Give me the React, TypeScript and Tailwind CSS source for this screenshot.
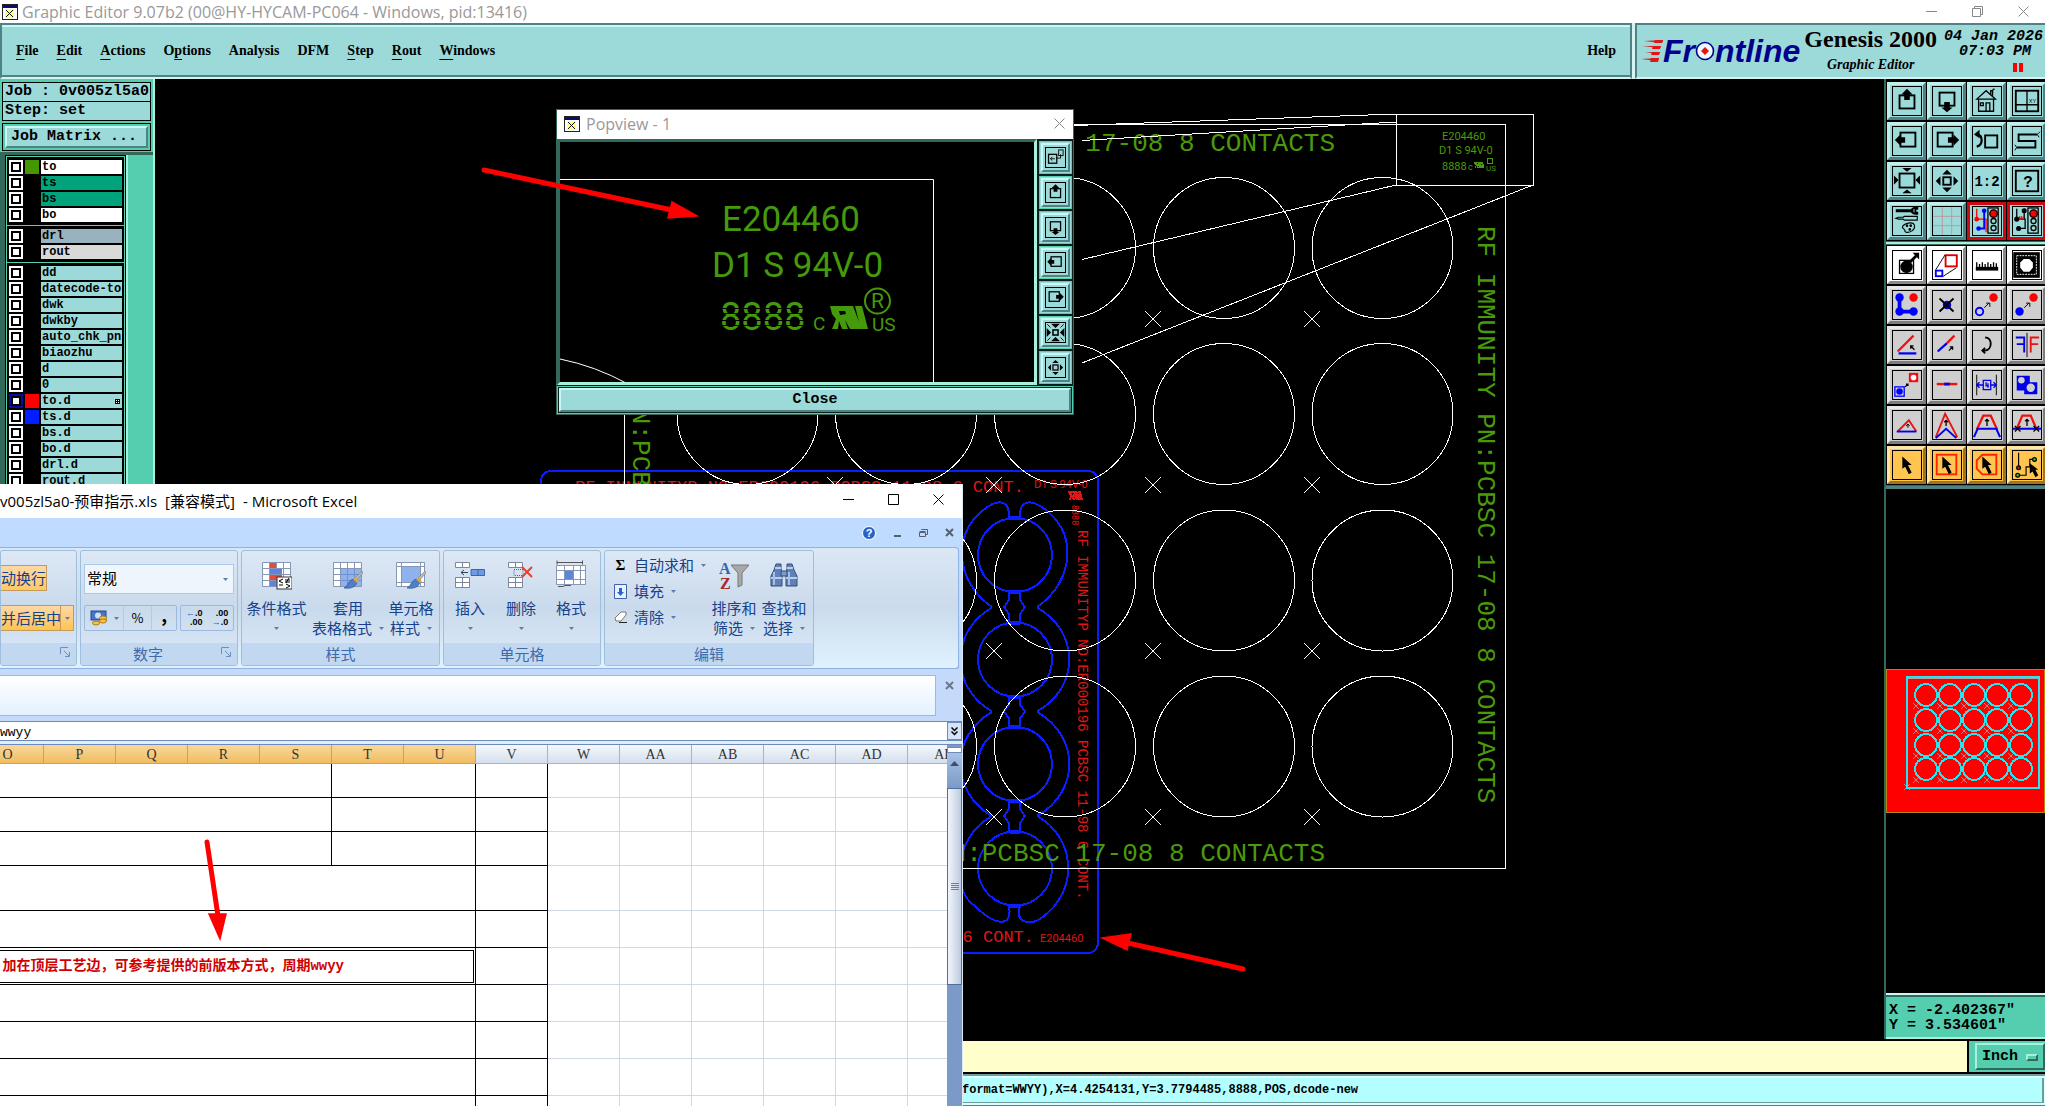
import { useState, type ReactNode } from 'react'

interface Layer {
  name: string
  bg: string
  swatch?: string
  active?: boolean
  marked?: boolean
}

const SIGNAL = 'bg-[#9cdada]'

const layerGroups: Layer[][] = [
  [
    { name: 'to', bg: 'bg-white', swatch: 'bg-[#459700]' },
    { name: 'ts', bg: 'bg-[#00a37c]' },
    { name: 'bs', bg: 'bg-[#00a37c]' },
    { name: 'bo', bg: 'bg-white' },
  ],
  [
    { name: 'drl', bg: 'bg-[#99b2bf]' },
    { name: 'rout', bg: 'bg-[#d9d9d9]' },
  ],
  [
    { name: 'dd', bg: SIGNAL },
    { name: 'datecode-to', bg: SIGNAL },
    { name: 'dwk', bg: SIGNAL },
    { name: 'dwkby', bg: SIGNAL },
    { name: 'auto_chk_pnl', bg: SIGNAL },
    { name: 'biaozhu', bg: SIGNAL },
    { name: 'd', bg: SIGNAL },
    { name: '0', bg: SIGNAL },
    { name: 'to.d', bg: SIGNAL, swatch: 'bg-[#ff0000]', active: true, marked: true },
    { name: 'ts.d', bg: SIGNAL, swatch: 'bg-[#001eff]' },
    { name: 'bs.d', bg: SIGNAL },
    { name: 'bo.d', bg: SIGNAL },
    { name: 'drl.d', bg: SIGNAL },
    { name: 'rout.d', bg: SIGNAL },
  ],
]

// before / underlined / after
const menus = [
  ['', 'F', 'ile'],
  ['', 'E', 'dit'],
  ['', 'A', 'ctions'],
  ['O', 'p', 'tions'],
  ['Analysis', '', ''],
  ['DFM', '', ''],
  ['', 'S', 'tep'],
  ['', 'R', 'out'],
  ['', 'W', 'indows'],
]

const BEVEL = 'border-2 border-t-[#c9f7f5] border-l-[#c9f7f5] border-r-[#4f8285] border-b-[#4f8285]'

/* ---------- icons ---------- */

function Svg({ children, className = 'w-full h-full' }: { children: ReactNode; className?: string }) {
  return (
    <svg viewBox="0 0 30 30" className={className} fill="none" stroke="#000" strokeWidth="1.4" aria-hidden="true">
      {children}
    </svg>
  )
}

const Tri = ({ d, fill = '#000' }: { d: string; fill?: string }) => <path d={d} fill={fill} stroke="none" />

const icons: Record<string, ReactNode> = {
  panUp: <><rect x="7" y="9" width="16" height="14" strokeWidth="2" /><Tri d="M15 2l6 6h-3v6h-6v-6h-3z" /></>,
  panDown: <><rect x="7" y="6" width="16" height="14" strokeWidth="2" /><Tri d="M15 27l6-5h-3v-6h-6v6h-3z" /></>,
  panLeft: <><rect x="8" y="6" width="16" height="15" strokeWidth="2" /><Tri d="M2 14l6-6v3h5v6H8v3z" /></>,
  panRight: <><rect x="5" y="6" width="16" height="15" strokeWidth="2" /><Tri d="M28 14l-6-6v3h-6v6h6v3z" /></>,
  home: <><path d="M4 13L14 4l10 9zM6 13v13h16V13M14 26v-9h4v9M8 17h3v3H8zM19 8V4h2v5M21 3l2-1" /></>,
  panes: <><rect x="3" y="4" width="24" height="22" strokeWidth="2" /><path d="M15 4v22M3 19h24" strokeWidth="1.4" /><text x="17" y="17" fontSize="6" stroke="none" fill="#000" fontFamily="Liberation Sans">XY</text></>,
  back: <><rect x="13" y="9" width="13" height="13" strokeWidth="2" /><path d="M4 8c7 1 7 11 0 13" strokeWidth="2.4" /><Tri d="M1 8l6-5v9z" /></>,
  snake: <><path d="M26 8H6v7h18v7H4" strokeWidth="2" /><path d="M26 8l3-3M26 8l2 3M4 22l-2-3M4 22l-2 3" strokeWidth="1" /></>,
  zoomIn: <><rect x="7" y="7" width="16" height="15" strokeWidth="2" /><Tri d="M10 1h10l-5 4zM10 28h10l-5-4zM1 9v10l5-5zM29 9v10l-5-5z" /></>,
  zoomOut: <><rect x="11" y="11" width="8" height="8" strokeWidth="2" /><Tri d="M10 8h10l-5-5zM10 22h10l-5 5zM8 10v10l-5-5zM22 10v10l5-5z" /></>,
  ratio: <text x="15" y="20" textAnchor="middle" fontSize="15" fontWeight="bold" stroke="none" fill="#000" fontFamily="Liberation Mono">1:2</text>,
  help: <><rect x="3" y="4" width="24" height="22" strokeWidth="2" /><text x="16" y="21" textAnchor="middle" fontSize="17" fontWeight="bold" stroke="none" fill="#000" fontFamily="Liberation Mono">?</text></>,
  tools: <><path d="M3 4h15M17 4h5" strokeWidth="3" /><path d="M27 1c-5-1-7 1-7 3s2 4 7 3M27 2h-3v4h3" strokeWidth="2" /><path d="M3 12l3-1h5l1-1h14v4H12l-1-1H6z" strokeWidth="1.200" /><path d="M10 22c1-5 12-7 13-2 1 4-4 8-9 7-3-1 0-2-2-3z" strokeWidth="1.200" /><circle cx="15" cy="20" r=".7" /><circle cx="19" cy="20" r=".7" /><circle cx="18" cy="24" r=".7" /></>,
  grid: <path d="M10 0v30M20 0v30M0 10h30M0 20h30" stroke="#b89a9a" strokeWidth="1" />,
  netBlue: <><path d="M4 2v11h10v14" stroke="#f00" /><path d="M12 4v19H6" stroke="#00f" strokeWidth="2" /><circle cx="4" cy="13" r="2.5" fill="#f00" stroke="none" /><circle cx="12" cy="4" r="2.5" fill="#00f" stroke="none" /><circle cx="6" cy="23" r="2.5" fill="#00f" stroke="none" /><rect x="16" y="1" width="11" height="27" /><circle cx="22" cy="7" r="4" fill="#f00" /><circle cx="22" cy="15" r="2.7" /><circle cx="22" cy="22.500" r="2.700" /></>,
  netBlack: <><path d="M4 2v11h9v10H6M12 4v9" /><path d="M7 13v-3M9 13v-3M11 13v-3M6 13h6" stroke="#f00" /><circle cx="4" cy="13" r="2" fill="#000" /><circle cx="12" cy="4" r="2" fill="#000" /><circle cx="6" cy="23" r="2" fill="#000" /><rect x="16" y="1" width="11" height="27" /><circle cx="22" cy="7" r="4" fill="#f00" /><circle cx="22" cy="15" r="2.700" /><circle cx="22" cy="22.500" r="2.700" /></>,
  padMove: <><rect x="7" y="10" width="15" height="14" /><circle cx="14.500" cy="17" r="6" fill="#000" /><path d="M18 12l7-7" strokeWidth="3" /><Tri d="M21 2h7v7z" /></>,
  copyScale: <><rect x="13.500" y="4.500" width="12" height="12" stroke="#d00" strokeWidth="2" /><rect x="3" y="21" width="7" height="6" stroke="#00f" strokeWidth="2" /><path d="M3 20L13 4M11 27l14-9" strokeWidth="1" /></>,
  ruler: <><path d="M3 19h24" strokeWidth="4" /><path d="M4 12v6M7 14v4M10 12v6M13 14v4M16 12v6M19 14v4M22 12v6M25 13v5" strokeWidth="1.400" /></>,
  frame: <><rect x="1" y="2" width="27" height="26" fill="#000" /><rect x="4" y="5" width="21" height="20" stroke="#fff" strokeWidth="1" strokeDasharray="2 1" /><path d="M11 8h7l4 4v6l-4 5h-7l-4-5v-6z" fill="#fff" /></>,
  nodes: <><path d="M7 7v15h15" stroke="#00f" strokeWidth="4" /><circle cx="7" cy="7" r="4.500" fill="#00f" stroke="none" /><circle cx="7" cy="22" r="4.500" fill="#00f" stroke="none" /><circle cx="22" cy="22" r="4.500" fill="#00f" stroke="none" /><circle cx="22" cy="7" r="4.500" fill="#f00" stroke="none" /></>,
  remove: <><circle cx="15" cy="15" r="4.500" fill="#00c" stroke="none" /><path d="M7 8l15 14M22 8L7 22" strokeWidth="2" /></>,
  ringTo: <><circle cx="7" cy="22" r="4" stroke="#00f" strokeWidth="2" /><circle cx="22" cy="7" r="4.500" fill="#f00" stroke="none" /><path d="M12 18l5-5M14 13h4v4" strokeWidth="1" /></>,
  discTo: <><circle cx="7" cy="22" r="4.500" fill="#00f" stroke="none" /><circle cx="22" cy="7" r="4.500" fill="#f00" stroke="none" /><path d="M12 18l5-5M14 13h4v4" strokeWidth="1" /></>,
  angle: <><path d="M5 22L22 5" stroke="#e11" strokeWidth="2.400" /><path d="M6 24h19" stroke="#00e" strokeWidth="2.400" /><path d="M23 20l-4-4M19 19v-3h3" /></>,
  slope: <><path d="M5 22l10-9" stroke="#00e" strokeWidth="2.400" /><path d="M15 13l8-8" stroke="#e11" strokeWidth="2.400" /><path d="M17 21l4-4M18 17h3v3" /></>,
  rotate: <path d="M13 7c8 0 8 13 0 14h-3M13 18l-3 3 3 3" strokeWidth="2" />,
  mirror: <><path d="M15 2v26" strokeWidth="1" /><path d="M12 23V7H3M12 14H4" stroke="#00e" strokeWidth="2" /><path d="M19 23V7h9M19 14h8" stroke="#e11" strokeWidth="2" /></>,
  swap: <><rect x="17" y="2" width="10" height="10" fill="#e11" stroke="none" /><circle cx="22" cy="7" r="3" fill="#fff" stroke="none" /><rect x="2" y="17" width="10" height="10" stroke="#00f" /><circle cx="7" cy="22" r="3.500" fill="#00f" stroke="none" /><path d="M13 17l3-3M14 14h2v2" /></>,
  segment: <><path d="M4 14h22" stroke="#e11" strokeWidth="2.600" /><path d="M12 14h6" stroke="#00e" strokeWidth="3" /></>,
  spacing: <><path d="M4 4v22M25 4v22" strokeWidth="1" /><path d="M4 15h7M19 15h6M7 12l-3 3 3 3M22 12l3 3-3 3M11 10h8v10h-8zM14 12v4h3M16 13v5" stroke="#00e" /></>,
  union: <><path d="M4 5h14v7h8v13H12v-4H4z" fill="#00e" stroke="none" /><circle cx="9" cy="10" r="3.500" fill="#cfcfcf" stroke="none" /><circle cx="19" cy="18" r="4.500" fill="#cfcfcf" stroke="none" /></>,
  peak1: <><path d="M5 22l12-12 8 12" stroke="#e11" strokeWidth="2" /><path d="M4 22h21" stroke="#00e" strokeWidth="2" /><path d="M16 18v-4M14 16l2-2 2 2" strokeWidth="1" /></>,
  peak2: <><path d="M3 28L13 3l13 25" stroke="#e11" strokeWidth="2" /><path d="M3 29l11-10 11 10" stroke="#00e" strokeWidth="2" /><path d="M14 16v-6M12 12l2-2 2 2" /></>,
  peak3: <><path d="M4 20l7-15h8l7 15" stroke="#e11" strokeWidth="2.400" /><path d="M1 28l4-9h20l4 9" stroke="#00e" strokeWidth="2.200" /><path d="M15 16V9M13 11l2-2 2 2" /></>,
  peak4: <><path d="M4 19l6-14h9l6 14" stroke="#e11" strokeWidth="2.400" /><path d="M0 19h30" stroke="#00e" strokeWidth="2.200" /><path d="M15 16V9M13 11l2-2 2 2M2 16l6 6M8 16l-6 6M22 16l6 6M28 16l-6 6" /></>,
  arrow: <Tri d="M10 6v13l3-2 4 8 3-2-4-8h4z" />,
  arrowBox: <><rect x="4" y="4" width="21" height="21" stroke="#f20" strokeWidth="2" /><Tri d="M10 6v13l3-2 4 8 3-2-4-8h4z" /></>,
  arrowPoly: <><path d="M10 4h15v21H10l-6-6V10z" stroke="#f20" strokeWidth="2" /><Tri d="M10 6v13l3-2 4 8 3-2-4-8h4z" /></>,
  arrowNet: <><path d="M6 2v16M5 26h9V17h4V9h6" strokeWidth="1.200" /><circle cx="6" cy="18" r="2" fill="#c20" /><circle cx="5" cy="26" r="2" fill="#2d2" /><circle cx="23" cy="9" r="2" fill="#2d2" /><Tri d="M18 13v11l3-2 3 6 3-2-3-6h3z" /></>,
  popNew: <><rect x="4" y="10" width="13" height="14" strokeWidth="2" /><rect x="20" y="3" width="7" height="9" /><path d="M14 17H7M10 14l-3 3 3 3M17 16h6v-6" /></>,
  popFit: <><rect x="11" y="11" width="8" height="8" strokeWidth="2.400" /><Tri d="M8 1h14l-7 7zM8 29h14l-7-7zM1 8v14l7-7zM29 8v14l-7-7z" /><path d="M2 2l5 5M28 2l-5 5M2 28l5-5M28 28l-5-5" /></>,
}

const viewTools = [
  'panUp', 'panDown', 'home', 'panes',
  'panLeft', 'panRight', 'back', 'snake',
  'zoomIn', 'zoomOut', 'ratio', 'help',
  'tools', 'grid', 'netBlue', 'netBlack',
]
const whiteTools = ['padMove', 'copyScale', 'ruler', 'frame']
const editTools = [
  'nodes', 'remove', 'ringTo', 'discTo',
  'angle', 'slope', 'rotate', 'mirror',
  'swap', 'segment', 'spacing', 'union',
  'peak1', 'peak2', 'peak3', 'peak4',
]
const selectTools = ['arrow', 'arrowBox', 'arrowPoly', 'arrowNet']
const popTools = ['popNew', 'panUp', 'panDown', 'panLeft', 'panRight', 'popFit', 'zoomOut']

function ToolButton({ name, tone }: { name: string; tone: string }) {
  return (
    <button aria-label={name} className={`flex h-[38px] w-[39px] shrink-0 items-center justify-center border-3 ${tone}`}>
      <span className="block h-[30px] w-[30px] border border-black">
        <Svg>{icons[name]}</Svg>
      </span>
    </button>
  )
}

const TEAL_TONE = 'bg-[#9cdada] border-t-[#bff0ee] border-l-[#bff0ee] border-r-[#4f8285] border-b-[#4f8285]'
const RED_TONE = 'bg-[#9cdada] border-[#cc0a12]'
const WHITE_TONE = 'bg-white border-t-white border-l-white border-r-[#8a8a8a] border-b-[#8a8a8a]'
const GRAY_TONE = 'bg-[#cfcfcf] border-t-[#e9e9e9] border-l-[#e9e9e9] border-r-[#7d7d7d] border-b-[#7d7d7d]'
const GOLD_TONE = 'bg-[#ffc550] border-t-[#ffe5a8] border-l-[#ffe5a8] border-r-[#a2741c] border-b-[#a2741c]'

function XIcon() {
  return (
    <svg viewBox="0 0 16 16" className="h-4 w-4 shrink-0" aria-hidden="true">
      <rect x="0.500" y="0.500" width="15" height="15" fill="#fff" stroke="#222" />
      <rect x="1" y="1" width="14" height="3" fill="#0b0b70" />
      <rect x="3" y="5" width="9" height="9" fill="#ffff88" />
      <path d="M4 6l7 7M11 6l-7 7" stroke="#111" />
    </svg>
  )
}

/* ---------- header ---------- */

function TitleBar() {
  return (
    <header className="flex h-[23px] items-center bg-white pl-[2px] font-['Open_Sans',sans-serif] text-[16px] leading-5 text-[#999]">
      <XIcon />
      <span className="ml-1 whitespace-nowrap">Graphic Editor 9.07b2 (00@HY-HYCAM-PC064 - Windows, pid:13416)</span>
      <div className="ml-auto flex gap-[35px] pr-4">
        <button aria-label="Minimize"><svg className="h-[11px] w-[11px]" stroke="#888" fill="none"><path d="M0 5.500h11" /></svg></button>
        <button aria-label="Restore"><svg className="h-[11px] w-[11px]" stroke="#888" fill="none"><path d="M.5 2.500h8v8h-8zM2.500 2.500v-2h8v8h-2" /></svg></button>
        <button aria-label="Close"><svg className="h-[11px] w-[11px]" stroke="#888" fill="none"><path d="M.5.5l10 10M10.500.5l-10 10" /></svg></button>
      </div>
    </header>
  )
}

function MenuBar() {
  return (
    <div className="flex h-[56px] bg-[#d4f3f2]">
      <nav className="flex flex-1 items-center gap-[18px] border-2 border-t-[#4f8285] border-l-[#4f8285] border-r-[#4f8285] border-b-[#d4f3f2] bg-[#9cdada] px-[14px] pb-[2px] font-['Liberation_Serif',serif] text-[14px] font-bold text-black shadow-[inset_0_-2px_0_#4f8285,inset_0_2px_0_#c9f7f5]">
        {menus.map(([a, u, b]) => (
          <button key={a + u + b}>
            {a}<span className="underline underline-offset-4">{u}</span>{b}
          </button>
        ))}
        <button className="ml-auto">Help</button>
      </nav>
      <div className="ml-[3px] flex w-[410px] border-2 border-r-0 border-t-[#4f8285] border-l-[#4f8285] border-b-[#d4f3f2] bg-[#9cdada] pl-1">
        <div className="flex items-center font-['Liberation_Sans',sans-serif] text-[32px] leading-none font-bold text-[#00008c] italic">
          <svg viewBox="0 0 22 24" className="h-6 w-[22px]" aria-hidden="true">
            <path d="M3 2l19-1-1 3zM1 7l19 0-1 2zM4 13l15 0-1 2zM0 20l18-1-1 3z" fill="#e01515" />
            <path d="M14 1h8l-1 3h-8zM12 7h8l-1 3h-8zM11 13h8l-1 3h-8zM10 19h8l-1 4h-8z" fill="#e01515" />
          </svg>
          <span>Fr</span>
          <svg viewBox="0 0 20 20" className="h-5 w-[20px]" aria-hidden="true">
            <circle cx="10" cy="10" r="8.500" fill="#eefafa" stroke="#00008c" strokeWidth="1.600" />
            <path d="M10 6l4 4-4 4-4-4z" fill="#e01515" />
          </svg>
          <span>ntline</span>
        </div>
        <div className="ml-[4px] flex flex-col items-center font-['Liberation_Serif',serif] font-bold whitespace-nowrap text-black">
          <span className="text-[24px] leading-[28px]">Genesis 2000</span>
          <span className="text-[14px] leading-6 italic">Graphic Editor</span>
        </div>
        <div className="ml-auto flex flex-col pt-1 pr-[2px] text-right font-['Liberation_Mono',monospace] text-[15px] leading-[15px] font-bold whitespace-nowrap text-black italic">
          <span>04 Jan 2026</span>
          <span className="pr-3">07:03 PM</span>
          <span className="mt-[4px] flex justify-end gap-[2px] pr-5">
            <i className="h-[9px] w-1 bg-[#ff0000]" />
            <i className="h-[9px] w-1 bg-[#ff0000]" />
          </span>
        </div>
      </div>
    </div>
  )
}

/* ---------- left panel ---------- */

function LayerPanel() {
  const [shown, setShown] = useState<string[]>([])
  const toggle = (name: string) =>
    setShown(prev => (prev.includes(name) ? prev.filter(n => n !== name) : [...prev, name]))

  return (
    <aside className="w-[155px] shrink-0 overflow-hidden border-r-2 border-[#a8efdd] bg-[#55ceb0] font-['Liberation_Mono',monospace] font-bold text-black">
      <div className="px-[2px] pt-[3px] text-[15px]">
        <div className="h-5 border border-black bg-[#9cdada] pl-[2px] leading-[18px] whitespace-nowrap">Job : 0v005zl5a0</div>
        <div className="h-[19px] border border-t-0 border-black bg-[#9cdada] pl-[2px] leading-[18px]">Step: set</div>
        <div className="mt-[2px] border border-black p-[2px]">
          <button className={`block h-[22px] w-full bg-[#9cdada] pl-1 text-left leading-4 whitespace-nowrap ${BEVEL}`}>Job Matrix ...</button>
        </div>
      </div>
      <div className="mt-px flex border-t-3 border-l-[5px] border-[#33695a]">
        <div className="border border-black p-px">
          {layerGroups.map((group, i) => (
            <ul key={i} className="mb-px border-2 border-black bg-black">
              {group.map(layer => (
                <li key={layer.name} className="flex h-4 items-center gap-[2px] text-[12px] leading-[13px]">
                  <label className={`flex h-[14px] w-[14px] items-center justify-center ${layer.active ? 'bg-[#0b0b9c]' : 'bg-white'}`}>
                    <input
                      type="checkbox"
                      aria-label={layer.name}
                      checked={shown.includes(layer.name)}
                      onChange={() => toggle(layer.name)}
                      className="h-[10px] w-[10px] appearance-none border-2 border-black bg-white checked:bg-black"
                    />
                  </label>
                  <i className={`h-[14px] w-[14px] ${layer.swatch ?? 'bg-black'}`} />
                  <span className={`flex h-[14px] w-[81px] items-center justify-between overflow-hidden pl-px whitespace-nowrap ${layer.bg}`}>
                    {layer.name}
                    {layer.marked && <span className="mr-[2px] grid grid-cols-2 gap-px border border-black bg-black"><i className="h-px w-px bg-white" /><i className="h-px w-px bg-white" /><i className="h-px w-px bg-white" /><i className="h-px w-px bg-white" /></span>}
                  </span>
                </li>
              ))}
            </ul>
          ))}
        </div>
        <i className="w-[2px] bg-[#a8efdd]" />
      </div>
    </aside>
  )
}

/* ---------- board drawing ---------- */

const LEGEND = 'RF IMMUNITY PN:PCBSC 17-08 8 CONTACTS'
const SUB_LEGEND = 'RF IMMUNITYP NO:ER000196 PCBSC 11-98 6 CONT.'
const cols = [747.5, 906, 1065, 1224, 1382.5]
const rows = [248, 414, 580.5, 746.5]
const padRows = [555, 659.5, 764, 868.5]
const NARROW = "'Liberation Sans Narrow','Roboto'"

const cross = (x: number, y: number, r: number) => `M${x - r} ${y - r}l${2 * r} ${2 * r}M${x + r} ${y - r}l${-2 * r} ${2 * r}`

function RuMark() {
  return <path d="M0 0H23L29 16L25 0H32L38 23H20L15 14L18 23H12L9 15L8 23H2L6 13L2 8ZM9 5L10 9L16 8L15 5Z" fillRule="evenodd" stroke="none" />
}

function Board() {
  return (
    <svg className="absolute inset-0 h-full w-full" fill="none" shapeRendering="crispEdges" aria-hidden="true">
      <g transform="translate(-155 -79)">
        <g stroke="#0a1eff" strokeWidth="2">
          <rect x="541" y="471" width="557" height="482" rx="10" />
          {padRows.map((y, i) => (
            <g key={y}>
              <circle cx="1015" cy={y} r="37" />
              <path d={`M1010 ${y - 37}h10M1010 ${y + 37}h10`} strokeWidth="4" />
              {i < 3 && (
                <path d={`M1009 ${y + 36}v9l-5 7 5 7v9M1020 ${y + 36}v9l5 7-5 7v9`} />
              )}
              {i > 0 && i < 3 && <path d={`M1037 ${y - 52}C1080 ${y - 28} 1080 ${y + 28} 1037 ${y + 52}M992 ${y - 52}C950 ${y - 28} 950 ${y + 28} 992 ${y + 52}`} />}
            </g>
          ))}
          <path d="M1037 607C1074 582 1080 530 1040 506C1030 500 1019 500 1020 518M992 607C955 582 950 530 989 506C999 500 1010 500 1009 518" />
          <path d="M1037 816C1074 836 1082 890 1040 919C1028 926 1015 922 1020 906M992 816C955 836 950 890 975 906C995 926 1013 928 1009 906" />
        </g>
        <g fill="#e01515" stroke="none" fontFamily="Liberation Mono" fontSize="17">
          <text x="575" y="492">{SUB_LEGEND}</text>
          <text x="1034" y="942" textAnchor="end">{SUB_LEGEND}</text>
          <text transform="translate(1078 530) rotate(90)" fontSize="14">{SUB_LEGEND}</text>
          <g fontFamily={NARROW} fontSize="11">
            <text x="1040" y="942">E204460</text>
            <text x="1034" y="488">D1 S 94V-0</text>
            <text transform="translate(1072 505) rotate(90)" fontSize="9">8888</text>
          </g>
          <g transform="translate(1068 491) scale(.4)"><RuMark /></g>
        </g>
        <g fill="#4a9a0a" fontFamily="Liberation Mono" fontSize="26">
          <text x="1335" y="151" textAnchor="end">{LEGEND}</text>
          <text x="1325" y="861" textAnchor="end">{LEGEND}</text>
          <text transform="translate(1478 226) rotate(90)">{LEGEND}</text>
          <text transform="translate(633 206) rotate(90)">{LEGEND}</text>
          <g fontFamily={NARROW} fontSize="11">
            <text x="1442" y="140">E204460</text>
            <text x="1439" y="154">D1 S 94V-0</text>
            <text x="1442" y="170">8888</text>
            <text x="1468" y="170" fontSize="9">c</text>
            <text x="1486" y="171" fontSize="8">US</text>
          </g>
          <g transform="translate(1474 162) scale(.28)"><RuMark /></g>
          <circle cx="1490" cy="161" r="3" stroke="#4a9a0a" fill="none" />
        </g>
        <g stroke="#fff">
          <rect x="624.5" y="124.5" width="881" height="744" />
          <rect x="1396.5" y="114.5" width="137" height="71" />
          {rows.map(y => cols.map(x => <circle key={`${x}-${y}`} cx={x} cy={y} r="70.5" />))}
          {rows.map(y => cols.slice(1).map(x => <path key={`${x}-${y}`} d={cross(Math.round(x - 71), Math.round(y + 70.5), 8)} />))}
          <path d="M1074 125.500L1396 114M1082 140.500L1396 122M1082 259.500L1396 185M1082 363L1533 185" />
        </g>
      </g>
    </svg>
  )
}

/* ---------- popview ---------- */

function Popview() {
  return (
    <section className="absolute top-[109px] left-[556px] flex w-[518px] flex-col border border-[#33695a] bg-[#0b1f1b]">
      <div className="flex h-[29px] items-center gap-[6px] bg-white pr-[8px] pb-[2px] pl-[7px] font-['Open_Sans',sans-serif] text-[16px] text-[#999]">
        <XIcon />
        Popview - 1
        <button aria-label="Close popview" className="ml-auto"><svg className="h-[11px] w-[11px]" stroke="#888" fill="none"><path d="M.5.5l10 10M10.500.5l-10 10" /></svg></button>
      </div>
      <div className="flex gap-[2px] pr-px">
        <div className="flex-1 border-3 border-t-[#33695a] border-l-[#33695a] border-r-[#a8efdd] border-b-[#a8efdd] bg-black">
          <svg className="h-full w-full" fill="none" aria-hidden="true">
            <g transform="translate(-560 -142)">
              <path d="M560 179.500H933.500V384M560 359Q595 366 628 384" stroke="#fff" />
              <g fill="#459a0c" stroke="none" fontFamily={NARROW}>
                <text x="722" y="231" fontSize="35">E204460</text>
                <text x="712" y="277" fontSize="35">D1 S 94V-0</text>
                <text x="720" y="330" fontSize="38">8888</text>
                <path d="M718 308.500h88M718 313.500h88M718 320.500h88M718 325.500h88" stroke="#000" />
                <text x="813" y="330" fontSize="19">C</text>
                <text x="872" y="331" fontSize="19">US</text>
                <text x="871" y="308" fontSize="21">R</text>
                <circle cx="877.500" cy="301" r="12.500" stroke="#459a0c" fill="none" strokeWidth="2" />
                <g transform="translate(830 306)"><RuMark /></g>
              </g>
            </g>
          </svg>
        </div>
        <div className="flex flex-col gap-[2px] pt-[2px] pb-px">
          {popTools.map(t => (
            <button key={t} aria-label={t} className="flex h-[33px] w-[33px] items-center justify-center border border-[#55ceb0] bg-[#9cdada] p-px">
              <span className={`flex h-full w-full items-center justify-center ${BEVEL}`}>
                <span className="block h-[21px] w-[21px] border border-black"><Svg>{icons[t]}</Svg></span>
              </span>
            </button>
          ))}
        </div>
      </div>
      <div className="mt-px border border-[#55ceb0] p-px">
        <button className={`block h-6 w-full bg-[#9cdada] font-['Liberation_Mono',monospace] text-[15px] leading-5 font-bold text-black ${BEVEL}`}>Close</button>
      </div>
    </section>
  )
}

/* ---------- right tools ---------- */

const miniCols = [39, 63, 87, 110, 134]
const miniRows = [25, 50, 75, 99]

function ToolPanel() {
  return (
    <aside className="flex w-[161px] shrink-0 flex-col border-l-2 border-[#33695a] bg-black pt-[3px]">
      <div className="grid grid-cols-[repeat(4,39px)] gap-x-px gap-y-[2px] overflow-hidden pl-px">
        {viewTools.map(t => <ToolButton key={t} name={t} tone={t.startsWith('net') ? RED_TONE : TEAL_TONE} />)}
      </div>
      <i className="my-px h-1 border-y border-[#33695a] bg-[#a8efdd]" />
      <div className="grid grid-cols-[repeat(4,39px)] gap-x-px gap-y-[2px] overflow-hidden pl-px">
        {whiteTools.map(t => <ToolButton key={t} name={t} tone={WHITE_TONE} />)}
        {editTools.map(t => <ToolButton key={t} name={t} tone={GRAY_TONE} />)}
        {selectTools.map(t => <ToolButton key={t} name={t} tone={GOLD_TONE} />)}
      </div>
      <i className="mt-px h-1 border-t border-[#33695a] bg-[#4f8285]" />
      <div className="flex flex-1 items-center">
        <svg className="h-[144px] w-full border border-[#b8860b] bg-[#ff0000]" fill="none" aria-hidden="true">
          <g stroke="#c98080">
            {miniRows.map(y => miniCols.map(x => <path key={`${x}-${y}`} d={cross(x - 10, y + 11, 3)} />))}
            <path d={cross(20, 117, 3)} />
          </g>
          <g stroke="#25e5f0" strokeWidth="2" shapeRendering="crispEdges">
            <rect x="20" y="7" width="132" height="111" />
            {miniRows.map(y => miniCols.map(x => <circle key={`${x}-${y}`} cx={x} cy={y} r="11" />))}
          </g>
          <path d="M21 8.500h130" stroke="#b0a0a0" />
        </svg>
      </div>
      <div className="h-[46px] border-y-2 border-t-[#c9f7f5] border-b-[#a8efdd] bg-[#55ceb0] pt-[8px] pl-[3px] font-['Liberation_Mono',monospace] text-[15px] leading-[15px] font-bold whitespace-pre text-black shadow-[inset_0_2px_0_#33695a]">
        <div>X = -2.402367&quot;</div>
        <div>Y = 3.534601&quot;</div>
      </div>
    </aside>
  )
}

function StatusArea() {
  return (
    <footer className="flex flex-col gap-[2px] bg-black pt-[2px] font-['Liberation_Mono',monospace] font-bold text-black">
      <div className="flex h-[31px]">
        <input aria-label="Command" className="min-w-0 flex-1 bg-[#ffffcc] px-2 outline-none" />
        <div className="ml-[2px] w-[76px] bg-[#55ceb0] py-[2px] pl-[6px]">
          <button className="flex h-[27px] w-full items-center justify-between border-2 border-t-[#a8efdd] border-l-[#a8efdd] border-r-[#33695a] border-b-[#33695a] pt-[2px] pr-[5px] pl-[5px] text-[15px]">
            Inch
            <i className="h-[7px] w-3 border-2 border-t-[#a8efdd] border-l-[#a8efdd] border-r-[#33695a] border-b-[#33695a]" />
          </button>
        </div>
      </div>
      <div className="h-8 border-t-2 border-b border-t-[#6f9c9c] border-b-[#4f8285] bg-[#d9ffff] pt-[2px] pr-[1px] pb-[2px]">
        <p className="h-full border-r-2 border-b border-[#6f9c9c] bg-[#b3ffff] pl-[962px] text-[12px] leading-[25px] whitespace-nowrap">
          format=WWYY),X=4.4254131,Y=3.7794485,8888,POS,dcode-new
        </p>
      </div>
    </footer>
  )
}

/* ---------- spreadsheet window ---------- */

const Caret = () => (
  <svg viewBox="0 0 5 3" className="h-[3px] w-[5px] shrink-0" aria-hidden="true"><path d="M0 0h5L2.500 3z" fill="#5b7db5" /></svg>
)

function Brush() {
  return <><path d="M29 11L20 20l2 2 8-9z" fill="#b9b9b9" stroke="#777" strokeWidth=".6" /><path d="M21 19c-6 1-5 6-10 9 7 1 12-1 13-6z" fill="#4f7fc4" stroke="#2c4f8c" strokeWidth=".6" /><path d="M20 19l4 4 2-2-4-4z" fill="#e0a845" stroke="none" /></>
}

const sheetGrid = 'M.5 2.500h28v24H.5zM.5 8.500h28M.5 14.500h28M.5 20.500h28M7.500 2.500v24M14.500 2.500v24M21.500 2.500v24'

const ribbonIcons: Record<string, ReactNode> = {
  cond: <><path d={sheetGrid} fill="#fff" stroke="#8796b5" strokeWidth="1" /><path d="M8 3h6v5H8zM8 15h12v5H8z" fill="#e84a3a" stroke="none" /><path d="M8 9h12v5H8zM8 21h6v5H8z" fill="#5c86dc" stroke="none" /><rect x="15" y="17" width="15" height="12" fill="#fff" stroke="#333" strokeWidth="1" /><path d="M21 19l-4 2 4 2M17 25h4M23 20h5M23 22h5M27 18l-3 5M24 24l4 2-4 2" strokeWidth="1" /></>,
  table: <><path d={sheetGrid} fill="#fff" stroke="#8796b5" strokeWidth="1" /><path d="M8 9h20v17H8z" fill="#8fb2ee" stroke="none" /><path d="M8 14.500h20M8 20.500h20M14.500 9v17M21.500 9v17" stroke="#6e90cf" strokeWidth="1" /><Brush /></>,
  cell: <><path d="M.5 2.500h28v24H.5zM.5 6.500h28M.5 22.500h28M5.500 2.500v24M24.500 2.500v24" fill="#fff" stroke="#8796b5" strokeWidth="1" /><path d="M6 7h18v15H6z" fill="#8fb2ee" stroke="none" /><Brush /></>,
  insert: <><path d="M.5 2.500h14v5H.5zM7.500 2.500v5M.5 17.500h14v10H.5zM7.500 17.500v10M.5 22.500h14" fill="#fff" stroke="#7c879c" strokeWidth="1" /><path d="M16 9.500h13.500v6H16zM23 9.500v6" fill="#6f9ae6" stroke="#3f64ae" strokeWidth="1" /><path d="M13 12.500H6M9 10l-3 2.500 3 2.500" stroke="#345" strokeWidth="1" /></>,
  remove: <><path d="M2.500 2.500h14v5h-14zM9.500 2.500v5M2.500 17.500h14v10h-14zM9.500 17.500v10M2.500 22.500h14" fill="#fff" stroke="#7c879c" strokeWidth="1" /><path d="M8 9.500h9v6H8z" stroke="#3f64ae" strokeWidth="1" strokeDasharray="1 1" /><path d="M16 7l10 10M26 7L16 17" stroke="#e5402e" strokeWidth="2" /></>,
  format: <><path d="M.5 5.500h29v19H.5zM.5 10.500h29M.5 19.500h29M8.500 5.500v19M17.500 5.500v19M24.500 5.500v19" fill="#fff" stroke="#8796b5" strokeWidth="1" /><path d="M9 11h8v8H9z" fill="#5c86dc" stroke="none" /><path d="M1 2.500h26M1 .5v4M26.500.5v4M2 26.500h5l2-1h6" stroke="#555" strokeWidth="1" /></>,
  sort: <><path d="M12 5h18l-7 8v12l-4 2V13z" fill="#a9a9a9" stroke="#777" strokeWidth="1" /><text x="0" y="14" fontSize="16" fontWeight="bold" fontFamily="Liberation Serif" fill="#3563b5" stroke="none">A</text><text x="1" y="29" fontSize="16" fontWeight="bold" fontFamily="Liberation Serif" fill="#a3282b" stroke="none">Z</text></>,
  find: <><path d="M7 4h5v5l1 3v14H2V16l3-6zM18 4h5l2 6 3 6v10H17V12l1-3z" fill="#5f81b8" stroke="#324c7d" strokeWidth="1" /><path d="M12 11h6v5h-6z" fill="#7e9bcb" stroke="#324c7d" strokeWidth="1" /><path d="M2 18h11M17 18h11M6 8h6M18 8h6" stroke="#dce7f8" strokeWidth="1.600" /><path d="M5 12v13M20 12v13" stroke="#a9c0e2" strokeWidth="2" /></>,
}

function BigButton({ icon, lines, width }: { icon: string; lines: string[]; width: string }) {
  return (
    <button className={`flex flex-col items-center pt-[9px] leading-5 whitespace-nowrap ${width}`}>
      <Svg className="mb-2 h-[30px] w-[30px]">{ribbonIcons[icon]}</Svg>
      <span>{lines[0]}</span>
      <span className="flex h-5 items-center gap-[7px]">{lines[1]}<Caret /></span>
    </button>
  )
}

function RibbonGroup({ title, width, launcher, children }: { title: string; width: string; launcher?: boolean; children: ReactNode }) {
  return (
    <div className={`flex h-[116px] shrink-0 flex-col overflow-hidden rounded-[3px] border border-[#9ebfdb] bg-linear-to-b from-[#dde8f5] via-[#c9daec] to-[#dcebf9] ${width}`}>
      <div className="flex flex-1">{children}</div>
      <div className={`relative h-[22px] bg-[#c2d8f1] text-center leading-[22px] text-[#3e6aaa] ${launcher ? 'pr-[22px]' : ''}`}>
        {title}
        {launcher && (
          <svg className="absolute right-[6px] bottom-[8px] h-[10px] w-[10px]" fill="none" stroke="#6b8fc0" aria-hidden="true"><path d="M.5 7V.5H8M4 4l5 5M9.500 5v4.500H5" /></svg>
        )}
      </div>
    </div>
  )
}

function Ribbon() {
  return (
    <div className="mr-[3px] flex h-[122px] gap-[3px] rounded-r-[4px] border border-l-0 border-[#8db2e3] bg-linear-to-b from-[#dbe7f5] via-[#cbdbec] to-[#e0f2ff] pt-[2px] text-[15px] text-[#15428b] shadow-[0_1px_0_#8fa9cc]">
      <RibbonGroup title="" width="w-[77px]" launcher>
        <div className="flex flex-col items-start gap-[14px] pt-[14px]">
          <button className="h-[26px] w-[46px] overflow-hidden border border-l-0 border-[#c29b5c] bg-linear-to-b from-[#fcd8a5] to-[#ffc967] text-left leading-6 whitespace-nowrap">动换行</button>
          <button className="flex h-[26px] w-[73px] items-center overflow-hidden border border-l-0 border-[#c29b5c] bg-linear-to-b from-[#fcd8a5] to-[#ffc350] whitespace-nowrap">
            <span className="w-[60px] border-r border-[#c29b5c] leading-6">并后居中</span>
            <span className="flex flex-1 justify-center"><Caret /></span>
          </button>
        </div>
      </RibbonGroup>
      <RibbonGroup title="数字" width="w-[158px]" launcher>
        <div className="flex flex-1 flex-col gap-[11px] px-[3px] pt-[13px]">
          <div className="relative">
            <select aria-label="数字格式" className="block h-[30px] w-full appearance-none border border-[#abc7e9] bg-[#eef5fd] pb-[2px] pl-[2px] text-black outline-none">
              <option>常规</option>
            </select>
            <span className="pointer-events-none absolute top-[14px] right-[6px]"><Caret /></span>
          </div>
          <div className="flex h-[26px] gap-[3px] text-black">
            <div className="flex flex-[94] rounded-[2px] border border-[#9db9dd]">
              <button aria-label="会计数字格式" className="flex w-[39px] items-center justify-center gap-[6px] border-r border-[#b5cae6]">
                <svg viewBox="0 0 18 16" className="h-4 w-[18px]" aria-hidden="true"><rect x="1" y="1" width="15" height="9" fill="#4b74c4" stroke="#27498f" /><circle cx="8" cy="5.500" r="3" fill="#cfe0fb" /><ellipse cx="13" cy="8" rx="3.500" ry="2" fill="#f6c445" stroke="#b27a11" /><ellipse cx="13" cy="11" rx="3.500" ry="2" fill="#f6c445" stroke="#b27a11" /><ellipse cx="6" cy="13" rx="3.500" ry="2" fill="#f6c445" stroke="#b27a11" /></svg>
                <Caret />
              </button>
              <button className="w-7 border-r border-[#b5cae6] text-[13px]">%</button>
              <button className="flex-1 pb-2 text-[18px] leading-4 font-bold">,</button>
            </div>
            <div className="flex flex-[53] items-center justify-around rounded-[2px] border border-[#9db9dd] font-['Liberation_Sans',sans-serif] text-[9px] leading-[9px] font-bold">
              <button className="text-right"><span className="text-[#2a62c4]">←</span>.0<br />.00</button>
              <button className="text-right">.00<br /><span className="text-[#2a62c4]">→</span>.0</button>
            </div>
          </div>
        </div>
      </RibbonGroup>
      <RibbonGroup title="样式" width="w-[199px]">
        <BigButton icon="cond" lines={['条件格式', '']} width="w-[69px]" />
        <BigButton icon="table" lines={['套用', '表格格式']} width="w-[74px]" />
        <BigButton icon="cell" lines={['单元格', '样式']} width="w-[52px]" />
      </RibbonGroup>
      <RibbonGroup title="单元格" width="w-[158px]">
        <BigButton icon="insert" lines={['插入', '']} width="w-[52px]" />
        <BigButton icon="remove" lines={['删除', '']} width="w-[50px]" />
        <BigButton icon="format" lines={['格式', '']} width="w-[50px]" />
      </RibbonGroup>
      <RibbonGroup title="编辑" width="w-[210px]">
        <div className="flex w-[104px] flex-col gap-[6px] pt-[4px] pl-[9px] whitespace-nowrap">
          <button className="flex items-center gap-[7px] leading-5"><b className="w-[13px] text-center font-['Liberation_Serif',serif] text-black">Σ</b>自动求和<Caret /></button>
          <button className="flex items-center gap-[7px] leading-5"><svg viewBox="0 0 13 15" className="h-[15px] w-[13px]" aria-hidden="true"><path d="M.5.5h12v14H.5z" fill="#e8f0fc" stroke="#3f64ae" /><path d="M5 4h3v4h2l-3.500 4L3 8h2z" fill="#2c62cf" /></svg>填充<Caret /></button>
          <button className="flex items-center gap-[7px] leading-5"><svg viewBox="0 0 13 12" className="h-3 w-[13px]" aria-hidden="true"><path d="M1 7l6-6h5v3l-5 6H2z" fill="#fff" stroke="#777" /><path d="M5 11.500h8" stroke="#222" /></svg>清除<Caret /></button>
        </div>
        <BigButton icon="sort" lines={['排序和', '筛选']} width="w-[50px]" />
        <BigButton icon="find" lines={['查找和', '选择']} width="w-[50px]" />
      </RibbonGroup>
    </div>
  )
}

const selectedCols = ['O', 'P', 'Q', 'R', 'S', 'T', 'U']
const plainCols = ['V', 'W', 'AA', 'AB', 'AC', 'AD', 'AE']
const sheetRows = [
  { h: 'h-[34px]', split: true },
  { h: 'h-[34px]', split: true },
  { h: 'h-[34px]', split: true },
  { h: 'h-[45px]' },
  { h: 'h-[37px]' },
  { h: 'h-[37px]', note: '.加在顶层工艺边，可参考提供的前版本方式，周期wwyy' },
  { h: 'h-[37px]' },
  { h: 'h-[37px]' },
  { h: 'h-[37px]' },
  { h: 'h-[37px]' },
]

function Sheet() {
  return (
    <div className="flex min-h-0 flex-1 overflow-hidden border-t border-[#6b8cb8]">
      <div className="flex-1 overflow-hidden bg-white">
        <table className="-ml-7 w-[1008px] table-fixed border-separate border-spacing-0">
          <thead>
            <tr className="font-['Liberation_Serif',serif] text-[14px] leading-4 text-[#333]">
              {selectedCols.map(c => <th key={c} className="h-[19px] border-r border-b border-[#e8974a] bg-linear-to-b from-[#f8d79b] to-[#f1bd5f] p-0 pt-[2px] font-normal">{c}</th>)}
              {plainCols.map(c => <th key={c} className="h-[19px] border-r border-b border-[#9eb6ce] bg-linear-to-b from-[#f5f8fc] to-[#d5dfed] p-0 pt-[2px] font-normal">{c}</th>)}
            </tr>
          </thead>
          <tbody>
            {sheetRows.map((row, i) => (
              <tr key={i}>
                {row.split ? (
                  <>
                    <td colSpan={5} className="border-r border-b border-black" />
                    <td colSpan={2} className="border-r border-b border-black" />
                  </>
                ) : (
                  <td colSpan={7} className={`border-r border-b border-black p-0 ${row.note ? 'outline-1 -outline-offset-3 outline-black' : ''}`}>
                    {row.note && <span className="block pl-[22px] font-['Liberation_Mono','Noto_Sans_CJK_SC',monospace] text-[14px] font-bold whitespace-nowrap text-[#d00000]">{row.note}</span>}
                  </td>
                )}
                <td className={`border-r border-b border-black p-0 ${row.h}`} />
                {plainCols.slice(1).map(c => <td key={c} className="border-r border-b border-[#d0d7e5] p-0" />)}
              </tr>
            ))}
          </tbody>
        </table>
      </div>
      <div className="flex w-[15px] flex-col bg-[#7b9ac8]">
        <i className="mt-[2px] h-[6px] border border-[#6b8cb8] bg-white" />
        <button aria-label="Scroll up" className="flex h-[35px] justify-center bg-linear-to-b from-[#a9c1e4] to-[#7b9ac8] pt-2"><svg className="h-[5px] w-[9px]" aria-hidden="true"><path d="M4.500 0L9 5H0z" fill="#3a4f73" /></svg></button>
        <div className="flex h-[197px] flex-col items-center justify-center gap-px border border-[#4f6f9f] bg-linear-to-r from-[#f3f6fa] to-[#bccbe0]">
          <i className="h-px w-2 bg-[#6a7f9f]" /><i className="h-px w-2 bg-[#6a7f9f]" /><i className="h-px w-2 bg-[#6a7f9f]" /><i className="h-px w-2 bg-[#6a7f9f]" />
        </div>
      </div>
    </div>
  )
}

function SpreadsheetWindow() {
  return (
    <section className="absolute top-[484px] bottom-0 left-0 flex w-[963px] flex-col overflow-hidden border-r border-[#dfe9f5] bg-[#bfdbff] font-['Noto_Sans_CJK_SC',sans-serif]">
      <div className="flex h-[34px] shrink-0 items-center bg-white font-['Open_Sans','Noto_Sans_CJK_SC',sans-serif] text-[15px] text-black">
        <span className="flex gap-2 whitespace-pre"><span>v005zl5a0-预审指示.xls</span><span>[兼容模式]</span><span>- Microsoft Excel</span></span>
        <div className="ml-auto flex gap-[34px] pr-[18px] pb-[3px]">
          <button aria-label="Minimize"><svg className="h-[11px] w-[11px]" stroke="#000" fill="none"><path d="M0 5.500h11" /></svg></button>
          <button aria-label="Maximize"><svg className="h-[11px] w-[11px]" stroke="#000" fill="none"><path d="M.5.5h10v10H.5z" /></svg></button>
          <button aria-label="Close"><svg className="h-[11px] w-[11px]" stroke="#000" fill="none"><path d="M.5.5l10 10M10.500.5l-10 10" /></svg></button>
        </div>
      </div>
      <div className="flex h-[29px] shrink-0 items-center justify-end gap-[17px] pr-[8px]">
        <button aria-label="Help"><svg viewBox="0 0 14 14" className="h-[14px] w-[14px]"><circle cx="7" cy="7" r="6.500" fill="#2a62c4" stroke="#fff" /><text x="7" y="11" textAnchor="middle" fontSize="11" fontWeight="bold" fill="#fff" fontFamily="Liberation Sans">?</text></svg></button>
        <button aria-label="Minimize workbook"><svg className="h-[10px] w-[9px]" stroke="#55606e" strokeWidth="2"><path d="M1 8h7" /></svg></button>
        <button aria-label="Restore workbook"><svg className="h-[10px] w-[9px]" stroke="#55606e" fill="none"><path d="M.5 4.500h6v4h-6zM.5 3.500h6M2.500 2V1.500h6v5H7" /></svg></button>
        <button aria-label="Close workbook"><svg className="h-[9px] w-[9px]" stroke="#55606e" strokeWidth="2"><path d="M1 1l7 7M8 1L1 8" /></svg></button>
      </div>
      <Ribbon />
      <div className="flex h-[52px] shrink-0 items-start bg-[#c5dafa] pt-[6px]">
        <div className="h-[41px] flex-1 border border-l-0 border-[#9db9dd] bg-linear-to-b from-white to-[#e3f1fe]" />
        <button aria-label="Close message bar" className="flex w-[26px] justify-center pt-[6px]"><svg className="h-[9px] w-[9px]" stroke="#6c7686" strokeWidth="2"><path d="M1 1l7 7M8 1L1 8" /></svg></button>
      </div>
      <div className="flex h-5 shrink-0 border-y border-[#6b8cb8] bg-white">
        <input aria-label="编辑栏" defaultValue="wwyy" className="min-w-0 flex-1 pt-[3px] font-['Liberation_Mono',monospace] text-[13px] text-black outline-none" />
        <button aria-label="Expand formula bar" className="flex w-[15px] items-center justify-center border border-[#6b8cb8] bg-[#d5e4f8]"><svg className="h-[9px] w-[7px]" stroke="#000" strokeWidth="1.500" fill="none"><path d="M.5.5l3 3 3-3M.5 4.500l3 3 3-3" /></svg></button>
      </div>
      <i className="h-[3px] shrink-0 bg-[#e3ecf8]" />
      <Sheet />
    </section>
  )
}

function Callouts() {
  return (
    <svg className="pointer-events-none absolute inset-0 h-full w-full" stroke="#ff0000" fill="#ff0000" strokeLinecap="round" aria-hidden="true">
      <path d="M484 170L672 210M207 842L218 916M1243 969L1128 943" strokeWidth="5" fill="none" />
      <path d="M697 216L672 202L668 218ZM220 939L209 914L226 914ZM1102 938L1131 934L1127 950Z" strokeWidth="1.500" />
    </svg>
  )
}

export default function App() {
  return (
    <div className="relative flex min-h-screen flex-col overflow-hidden bg-black">
      <TitleBar />
      <MenuBar />
      <main className="flex flex-1">
        <LayerPanel />
        <div className="relative flex-1 overflow-hidden bg-black">
          <Board />
        </div>
        <ToolPanel />
      </main>
      <StatusArea />
      <Popview />
      <SpreadsheetWindow />
      <Callouts />
    </div>
  )
}
